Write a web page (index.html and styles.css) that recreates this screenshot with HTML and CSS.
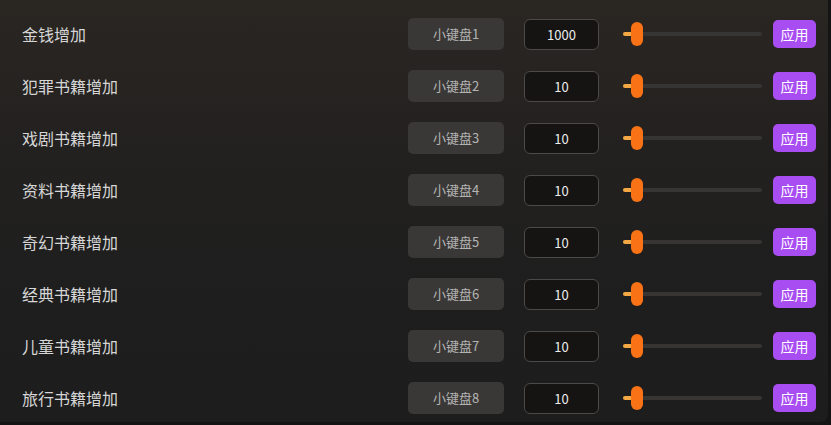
FILE: index.html
```html
<!DOCTYPE html>
<html lang="zh-CN">

<head>
    <meta charset="UTF-8">
    <meta name="viewport" content="width=device-width, initial-scale=1.0">
    <title>书籍增加</title>
    <link rel="stylesheet" href="styles.css">
</head>

<body>

    <div class="panel">
        <div class="row">
            <div class="label">金钱增加</div>
            <div class="key">小键盘1</div>
            <input class="amount" type="text" value="1000">
            <div class="slider"><div class="fill"></div><div class="thumb"></div></div>
            <button class="apply">应用</button>
        </div>
        <div class="row">
            <div class="label">犯罪书籍增加</div>
            <div class="key">小键盘2</div>
            <input class="amount" type="text" value="10">
            <div class="slider"><div class="fill"></div><div class="thumb"></div></div>
            <button class="apply">应用</button>
        </div>
        <div class="row">
            <div class="label">戏剧书籍增加</div>
            <div class="key">小键盘3</div>
            <input class="amount" type="text" value="10">
            <div class="slider"><div class="fill"></div><div class="thumb"></div></div>
            <button class="apply">应用</button>
        </div>
        <div class="row">
            <div class="label">资料书籍增加</div>
            <div class="key">小键盘4</div>
            <input class="amount" type="text" value="10">
            <div class="slider"><div class="fill"></div><div class="thumb"></div></div>
            <button class="apply">应用</button>
        </div>
        <div class="row">
            <div class="label">奇幻书籍增加</div>
            <div class="key">小键盘5</div>
            <input class="amount" type="text" value="10">
            <div class="slider"><div class="fill"></div><div class="thumb"></div></div>
            <button class="apply">应用</button>
        </div>
        <div class="row">
            <div class="label">经典书籍增加</div>
            <div class="key">小键盘6</div>
            <input class="amount" type="text" value="10">
            <div class="slider"><div class="fill"></div><div class="thumb"></div></div>
            <button class="apply">应用</button>
        </div>
        <div class="row">
            <div class="label">儿童书籍增加</div>
            <div class="key">小键盘7</div>
            <input class="amount" type="text" value="10">
            <div class="slider"><div class="fill"></div><div class="thumb"></div></div>
            <button class="apply">应用</button>
        </div>
        <div class="row">
            <div class="label">旅行书籍增加</div>
            <div class="key">小键盘8</div>
            <input class="amount" type="text" value="10">
            <div class="slider"><div class="fill"></div><div class="thumb"></div></div>
            <button class="apply">应用</button>
        </div>
    </div>

</body>

</html>
```

FILE: styles.css
```css
* {
    box-sizing: border-box;
    margin: 0;
    padding: 0;
}

body {
    font-family: "Noto Sans CJK SC", "Noto Sans", sans-serif;
    background-color: #141414;
    width: 831px;
    height: 425px;
    overflow: hidden;
}

.panel {
    width: 828px;
    height: 422px;
    padding: 8px 12px 0 22px;
    background: linear-gradient(180deg, #2a2622 0%, #232120 35%, #1e1e1e 70%, #1d1d1d 100%);
    border-bottom-right-radius: 8px;
}

.row {
    display: flex;
    align-items: center;
    height: 52px;
}

.label {
    flex: 1;
    color: #d6d6d6;
    font-size: 16px;
}

.key {
    width: 96px;
    height: 32px;
    line-height: 32px;
    text-align: center;
    background-color: #3a3836;
    color: #b4b4b4;
    font-size: 13px;
    border-radius: 5px;
}

.amount {
    width: 75px;
    height: 31px;
    margin-left: 20px;
    background-color: #151413;
    border: 1px solid #4c4a48;
    border-radius: 6px;
    color: #ececec;
    font-family: inherit;
    font-size: 13px;
    text-align: center;
    outline: none;
}

.slider {
    position: relative;
    width: 139px;
    height: 4px;
    margin-left: 24px;
    background-color: #363534;
    border-radius: 2px;
}

.fill {
    width: 9px;
    height: 4px;
    background-color: #f4a844;
    border-radius: 2px 0 0 2px;
}

.thumb {
    position: absolute;
    left: 8px;
    top: -10px;
    width: 12px;
    height: 24px;
    background-color: #f97316;
    border-radius: 6px;
}

.apply {
    width: 43px;
    height: 28px;
    margin-left: 11px;
    background-color: #a84df2;
    color: #ffffff;
    border: none;
    border-radius: 5px;
    font-family: inherit;
    font-size: 14px;
    cursor: pointer;
}
```
